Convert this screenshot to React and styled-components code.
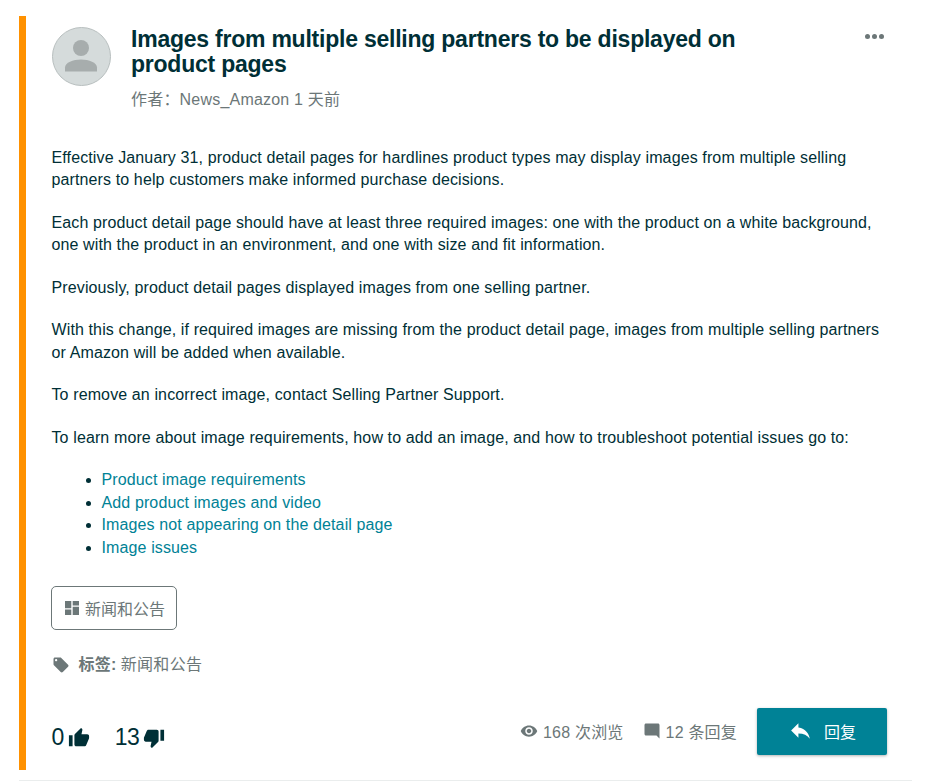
import React from 'react';
import styled, {createGlobalStyle} from 'styled-components';

const Global = createGlobalStyle`
    html, body {
        margin: 0;
        padding: 0;
        background: #fff;
        font-family: "Liberation Sans", "Noto Sans CJK SC", sans-serif;
    }
`;

const Page = styled.div`
    width: 934px;
    height: 781px;
    padding: 16px 22px 0 19px;
    box-sizing: border-box;
    overflow: hidden;
`;

const Card = styled.article`
    height: 754px;
    border-left: 7px solid #ff9100;
    padding: 11px 25px 0 25.5px;
    box-sizing: border-box;
    display: flex;
    flex-direction: column;
`;

const Divider = styled.div`
    height: 1px;
    margin-top: 10px;
    background: #eaeded;
`;

const Header = styled.header`
    display: flex;
    align-items: flex-start;
`;

const Avatar = styled.div`
    width: 59px;
    height: 59px;
    box-sizing: border-box;
    flex: none;
    border-radius: 50%;
    border: 1px solid #b8bfbf;
    background: #d5dbdb;
    display: flex;
    align-items: center;
    justify-content: center;
    overflow: hidden;
    svg { width: 34px; height: 34px; }
`;

const HeaderText = styled.div`
    margin-left: 20.5px;
    flex: 1;
`;

const Title = styled.h1`
    margin: 0;
    width: 640px;
    font-size: 23px;
    letter-spacing: -0.23px;
    line-height: 24.6px;
    font-weight: 700;
    color: #002f36;
`;

const Meta = styled.div`
    margin-top: 13px;
    font-size: 16px;
    letter-spacing: 0.2px;
    line-height: 22px;
    color: #6c7778;
`;

const More = styled.div`
    display: flex;
    gap: 2px;
    margin: 7px 3px 0 0;
    flex: none;
`;

const Dot = styled.span`
    width: 5px;
    height: 5px;
    border-radius: 50%;
    background: #6c7778;
`;

const Body = styled.div`
    margin-top: 35.8px;
    font-size: 16px;
    letter-spacing: 0.12px;
    line-height: 22.4px;
    color: #002f36;
    p { margin: 0 0 20.1px; }
`;

const LinkList = styled.ul`
    margin: 0;
    padding-left: 50px;
    line-height: 22.6px;
    li::marker { color: #002f36; }
`;

const Anchor = styled.a`
    color: #008296;
    text-decoration: none;
`;

const TopicButton = styled.div`
    align-self: flex-start;
    margin: 26.4px 0 0 -0.5px;
    height: 44px;
    box-sizing: border-box;
    padding: 0 11px 0 12px;
    display: flex;
    align-items: center;
    gap: 5px;
    border: 1px solid #6c7778;
    border-radius: 5px;
    font-size: 16px;
    color: #6c7778;
    svg { width: 16px; height: 16px; }
`;

const TagRow = styled.div`
    margin-top: 24px;
    display: flex;
    align-items: center;
    font-size: 16px;
    letter-spacing: 0.3px;
    line-height: 22px;
    color: #6c7778;
    svg { width: 18px; height: 18px; margin-right: 9px; }
    b { margin-right: 4px; }
`;

const Footer = styled.footer`
    margin-top: auto;
    margin-bottom: 15px;
    display: flex;
    align-items: center;
    justify-content: space-between;
`;

const Votes = styled.div`
    display: flex;
    align-items: center;
    gap: 25px;
    padding-top: 12px;
`;

const Vote = styled.div`
    display: flex;
    align-items: center;
    gap: 4px;
    font-size: 23px;
    letter-spacing: -0.5px;
    color: #002f36;
    svg { width: 22px; height: 22px; fill: #002f36; }
`;

const Stats = styled.div`
    display: flex;
    align-items: center;
`;

const Stat = styled.div`
    display: flex;
    align-items: center;
    gap: 5px;
    margin-right: 20px;
    padding-bottom: 2px;
    font-size: 16px;
    letter-spacing: 0.2px;
    color: #6c7778;
    svg { width: 18px; height: 18px; fill: #6c7778; }
    &:first-child { margin-right: 19px; }
`;

const ReplyButton = styled.button`
    width: 130px;
    height: 47px;
    border: 0;
    padding: 0 0 2px;
    border-radius: 2px;
    background: #008296;
    box-shadow: 0 1px 3px rgba(0, 0, 0, 0.3);
    color: #fff;
    font-family: inherit;
    font-size: 16px;
    display: flex;
    align-items: center;
    justify-content: center;
    gap: 11px;
    svg { width: 25px; height: 25px; fill: #fff; }
`;

const links = [
    'Product image requirements',
    'Add product images and video',
    'Images not appearing on the detail page',
    'Image issues',
];

const App = () => (
    <Page>
        <Global />
        <Card>
            <Header>
                <Avatar>
                    <svg viewBox="0 0 34 34" fill="#a7adad">
                        <circle cx="17" cy="8" r="8" />
                        <path d="M1 31.500v-4c0-5 8-8 16-8s16 3 16 8v4z" />
                    </svg>
                </Avatar>
                <HeaderText>
                    <Title>Images from multiple selling partners to be displayed on product pages</Title>
                    <Meta>作者：News_Amazon 1 天前</Meta>
                </HeaderText>
                <More><Dot /><Dot /><Dot /></More>
            </Header>
            <Body>
                <p>Effective January 31, product detail pages for hardlines product types may display images from multiple selling partners to help customers make informed purchase decisions.</p>
                <p>Each product detail page should have at least three required images: one with the product on a white background, one with the product in an environment, and one with size and fit information.</p>
                <p>Previously, product detail pages displayed images from one selling partner.</p>
                <p>With this change, if required images are missing from the product detail page, images from multiple selling partners or Amazon will be added when available.</p>
                <p>To remove an incorrect image, contact Selling Partner Support.</p>
                <p>To learn more about image requirements, how to add an image, and how to troubleshoot potential issues go to:</p>
                <LinkList>
                    {links.map(l => <li key={l}><Anchor href="#">{l}</Anchor></li>)}
                </LinkList>
            </Body>
            <TopicButton>
                <svg viewBox="0 0 16 16" fill="#6c7778">
                    <path d="M1 1h6.300v7.300H1zM8.700 1H15v4.500H8.700zM1 9.500h6.300V15H1zM8.700 6.800H15V15H8.700z" />
                </svg>
                新闻和公告
            </TopicButton>
            <TagRow>
                <svg viewBox="0 0 24 24" fill="#6c7778">
                    <path d="M21.400 11.600l-9-9C12 2.200 11.500 2 11 2H4C2.900 2 2 2.900 2 4v7c0 .6.200 1.100.6 1.400l9 9c.4.400.9.600 1.400.600s1-.2 1.400-.6l7-7c.4-.4.600-.9.600-1.400s-.2-1-.6-1.400zM5.500 7C4.700 7 4 6.300 4 5.500S4.700 4 5.500 4 7 4.700 7 5.500 6.300 7 5.500 7z" />
                </svg>
                <b>标签:</b> 新闻和公告
            </TagRow>
            <Footer>
                <Votes>
                    <Vote>
                        0
                        <svg viewBox="0 0 24 24"><path d="M1 21h4V9H1v12zm22-11c0-1.100-.9-2-2-2h-6.300l1-4.600v-.3c0-.4-.2-.8-.4-1.100L14.200 1 7.600 7.600C7.200 8 7 8.500 7 9v10c0 1.100.9 2 2 2h9c.8 0 1.500-.5 1.800-1.200l3-7.100c.1-.2.2-.5.2-.7v-2z" /></svg>
                    </Vote>
                    <Vote>
                        13
                        <svg viewBox="0 0 24 24"><path d="M15 3H6c-.8 0-1.500.5-1.800 1.200l-3 7.100c-.1.200-.2.500-.2.700v2c0 1.100.9 2 2 2h6.300l-1 4.600v.3c0 .4.200.8.400 1.100L9.800 23l6.600-6.600c.4-.4.600-.9.600-1.400V5c0-1.100-.9-2-2-2zm4 0v12h4V3h-4z" /></svg>
                    </Vote>
                </Votes>
                <Stats>
                    <Stat>
                        <svg viewBox="0 0 24 24"><path d="M12 4.500C7 4.500 2.700 7.600 1 12c1.700 4.400 6 7.500 11 7.500s9.300-3.100 11-7.500c-1.700-4.400-6-7.500-11-7.500zM12 17c-2.800 0-5-2.200-5-5s2.200-5 5-5 5 2.200 5 5-2.200 5-5 5zm0-8c-1.700 0-3 1.300-3 3s1.300 3 3 3 3-1.300 3-3-1.300-3-3-3z" /></svg>
                        168 次浏览
                    </Stat>
                    <Stat>
                        <svg viewBox="0 0 24 24"><path d="M22 4c0-1.100-.9-2-2-2H4c-1.100 0-2 .9-2 2v12c0 1.100.9 2 2 2h14l4 4V4z" /></svg>
                        12 条回复
                    </Stat>
                    <ReplyButton>
                        <svg viewBox="0 0 24 24"><path d="M10 9V5l-7 7 7 7v-4.100c5 0 8.500 1.600 11 5.100-1-5-4-10-11-11z" /></svg>
                        回复
                    </ReplyButton>
                </Stats>
            </Footer>
        </Card>
        <Divider />
    </Page>
);

export default App;
